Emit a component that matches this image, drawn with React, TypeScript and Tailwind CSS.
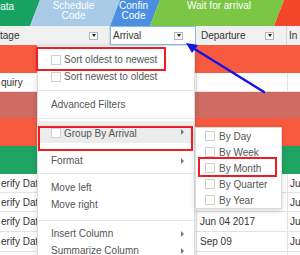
import React from "react";

type Row = {
  h: string;
  bg: string;
  white?: boolean;
  c1?: string;
  c3?: string;
  c4?: string;
};

const rows: Row[] = [
  { h: "h-[28px]", bg: "bg-[#f85a3f]" },
  { h: "h-[19px]", bg: "bg-white", white: true, c1: "quiry" },
  { h: "h-[26px]", bg: "bg-[#cf6b63]" },
  { h: "h-[28px]", bg: "bg-[#f85a3f]" },
  { h: "h-[28px]", bg: "bg-[#1fa463]" },
  { h: "h-[19px]", bg: "bg-white", white: true, c1: "erify Data", c4: "Ju" },
  { h: "h-[19px]", bg: "bg-white", white: true, c1: "erify Data", c4: "Ju" },
  { h: "h-[20px]", bg: "bg-white", white: true, c1: "erify Data", c3: "Jun 04 2017", c4: "Ju" },
  { h: "h-[20px]", bg: "bg-white", white: true, c1: "erify Data", c3: "Sep 09", c4: "Ju" },
  { h: "h-[20px]", bg: "bg-white", white: true, c1: "erify Data", c4: "Ju" },
];

function DropBtn() {
  return (
    <div className="w-[9px] h-[8px] border border-[#b5b5b5] bg-[#fafafa] flex items-center justify-center shrink-0">
      <div className="w-0 h-0 border-l-[2.5px] border-r-[2.5px] border-t-[3px] border-l-transparent border-r-transparent border-t-[#222]" />
    </div>
  );
}

function Check() {
  return <div className="w-[10px] h-[10px] border border-[#cfcfcf] bg-white shrink-0 mr-[3px]" />;
}

function Arrow() {
  return <div className="w-0 h-0 border-t-[3px] border-b-[3px] border-l-[3.5px] border-t-transparent border-b-transparent border-l-[#777]" />;
}

export default function App() {
  return (
    <div className="relative w-[300px] h-[255px] overflow-hidden bg-white font-['Liberation_Sans',Arial,sans-serif] text-[10px] text-[#333]">
      {/* Banner */}
      <div className="flex h-[26px] text-white leading-[10px]">
        <div className="ml-[-10px] w-[50px] shrink-0 bg-[#17a262] [clip-path:polygon(10px_0,100%_0,calc(100%_-_10px)_100%,0_100%)] pt-[2px] pl-[3px]">
          Data
        </div>
        <div className="ml-[-10px] w-[90px] shrink-0 bg-[#a9cbe8] [clip-path:polygon(10px_0,100%_0,calc(100%_-_10px)_100%,0_100%)] pt-[1px] pr-[3px] flex flex-col items-center">
          <span>Schedule</span>
          <span>Code</span>
        </div>
        <div className="ml-[-10px] w-[50px] shrink-0 bg-[#4a8fe0] [clip-path:polygon(10px_0,100%_0,calc(100%_-_10px)_100%,0_100%)] pt-[1px] pr-[3px] flex flex-col items-center">
          <span>Confin</span>
          <span>Code</span>
        </div>
        <div className="ml-[-10px] w-[134px] shrink-0 bg-[#7bc644] [clip-path:polygon(10px_0,100%_0,calc(100%_-_10px)_100%,0_100%)] pt-[1px] pl-[4px] flex flex-col items-center">
          <span>Wait for arrival</span>
        </div>
        <div className="ml-[-10px] w-[50px] shrink-0 bg-[#f4462a] [clip-path:polygon(10px_0,100%_0,calc(100%_-_10px)_100%,0_100%)]" />
      </div>

      {/* Header row */}
      <div className="flex h-[19px] bg-[#f0f0f0] text-[#333]">
        <div className="w-[110px] shrink-0 flex items-center justify-between pl-[0px] pr-[11px] border-r border-[#d6d6d6]">
          <span>tage</span>
          <DropBtn />
        </div>
        <div className="w-[86px] shrink-0 flex items-center justify-between pl-[2px] pr-[12px] border border-[#86bde8] bg-white">
          <span>Arrival</span>
          <DropBtn />
        </div>
        <div className="w-[91px] shrink-0 flex items-center justify-between pl-[5px] pr-[12px] border-r border-[#d6d6d6]">
          <span>Departure</span>
          <DropBtn />
        </div>
        <div className="flex-1 flex items-center pl-[2px]">In</div>
      </div>

      {/* Body rows */}
      {rows.map((r, i) => (
        <div key={i} className={`flex ${r.h} ${r.bg} ${r.white ? "border-b border-[#e3e3e3]" : ""}`}>
          <div className="w-[110px] shrink-0 flex items-center pl-[1px] whitespace-nowrap overflow-hidden">{r.c1}</div>
          <div className="w-[86px] shrink-0" />
          <div className={`w-[91px] shrink-0 flex items-center pl-[3px] whitespace-nowrap ${r.white ? "border-l border-[#e3e3e3]" : ""}`}>{r.c3}</div>
          <div className={`flex-1 flex items-center pl-[2px] whitespace-nowrap ${r.white ? "border-l border-[#e3e3e3]" : ""}`}>{r.c4}</div>
        </div>
      ))}

      {/* Context menu */}
      <div className="absolute left-[37px] top-[45px] w-[158px] h-[230px] bg-white border border-[#dcdcdc] shadow-[0_2px_6px_rgba(0,0,0,0.15)] text-[#555] flex flex-col pt-[5px]">
        <div className="h-[17px] flex items-center pl-[13px]">
          <Check />
          <span>Sort oldest to newest</span>
        </div>
        <div className="h-[17px] flex items-center pl-[13px]">
          <Check />
          <span>Sort newest to oldest</span>
        </div>
        <div className="mt-[5px] h-[1px] bg-[#e8e8e8]" />
        <div className="mt-[5px] h-[17px] flex items-center pl-[13px]">Advanced Filters</div>
        <div className="mt-[5px] h-[1px] bg-[#e8e8e8]" />
        <div className="mt-[2px] h-[22px] flex items-center justify-between pl-[13px] pr-[10px] bg-[#ececec]">
          <div className="flex items-center pt-[2px]">
            <Check />
            <span>Group By Arrival</span>
          </div>
          <Arrow />
        </div>
        <div className="mt-[9px] h-[17px] flex items-center justify-between pl-[13px] pr-[10px]">
          <span>Format</span>
          <Arrow />
        </div>
        <div className="mt-[4px] h-[1px] bg-[#e8e8e8]" />
        <div className="mt-[5px] h-[17px] flex items-center pl-[13px]">Move left</div>
        <div className="h-[17px] flex items-center pl-[13px]">Move right</div>
        <div className="mt-[7px] h-[1px] bg-[#e8e8e8]" />
        <div className="mt-[4px] h-[17px] flex items-center justify-between pl-[13px] pr-[10px]">
          <span>Insert Column</span>
          <Arrow />
        </div>
        <div className="h-[17px] flex items-center justify-between pl-[13px] pr-[10px]">
          <span>Summarize Column</span>
          <Arrow />
        </div>
      </div>

      {/* Submenu */}
      <div className="absolute left-[195px] top-[127px] w-[87px] bg-white border border-[#dcdcdc] shadow-[0_2px_6px_rgba(0,0,0,0.15)] text-[#555] flex flex-col">
        {["By Day", "By Week", "By Month", "By Quarter", "By Year"].map((t) => (
          <div key={t} className="h-[16px] flex items-center pl-[9px]">
            <div className="w-[10px] h-[10px] border border-[#cfcfcf] bg-white shrink-0 mr-[4px]" />
            <span>{t}</span>
          </div>
        ))}
      </div>

      {/* Red annotation boxes */}
      <div className="absolute left-[36px] top-[47px] w-[130px] h-[24px] border-2 border-[#ee1c25]" />
      <div className="absolute left-[38px] top-[126px] w-[155px] h-[25px] border-2 border-[#ee1c25]" />
      <div className="absolute left-[198px] top-[157px] w-[79px] h-[20px] border-2 border-[#ee1c25]" />

      {/* Blue arrow */}
      <svg className="absolute left-0 top-0 pointer-events-none" width="300" height="255" viewBox="0 0 300 255">
        <line x1="264" y1="92" x2="193" y2="48" stroke="#1515e0" strokeWidth="2.5" strokeLinecap="round" />
        <polygon points="186,43 198,45 192,53" fill="#1515e0" />
      </svg>
    </div>
  );
}
